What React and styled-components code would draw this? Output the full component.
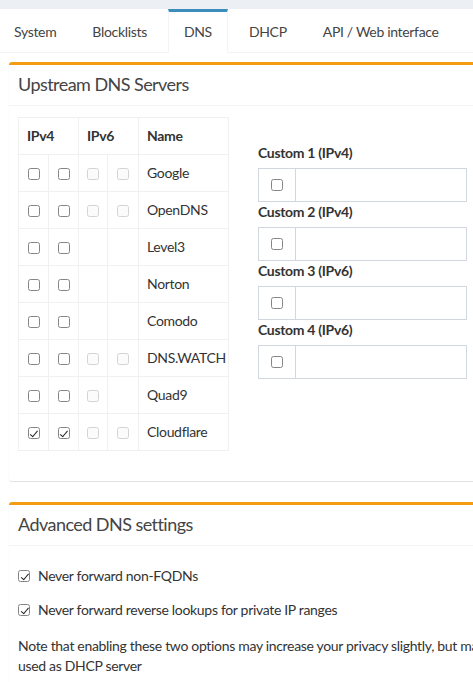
import React from "react";
import styled, { createGlobalStyle, css } from "styled-components";

const GlobalStyle = createGlobalStyle`
  html, body { margin: 0; padding: 0; }
  body {
    overflow: hidden;
    background: #ecf0f5;
    font-family: "Lato", "Liberation Sans", sans-serif;
    font-size: 14px;
    letter-spacing: -0.32px;
    color: #333;
  }
  * { box-sizing: border-box; }
`;

const Page = styled.div`
  width: 1000px;
  padding-top: 9px;
`;

const TabsPanel = styled.div`
  background: #fff;
  min-height: 700px;
`;

const TabBar = styled.ul`
  display: flex;
  margin: 0;
  padding: 0;
  list-style: none;
  border-bottom: 1px solid #f4f4f4;
`;

const Tab = styled.li`
  padding: 10px 15px;
  margin-right: 6px;
  line-height: 20px;
  color: #444;
  border-top: 3px solid transparent;
  white-space: nowrap;
  &:first-child {
    padding-left: 14px;
  }
  ${(p) =>
    p.$active &&
    css`
      border-top-color: #3c8dbc;
      border-left: 1px solid #f4f4f4;
      border-right: 1px solid #f4f4f4;
      margin-bottom: -1px;
      padding-bottom: 11px;
      background: #fff;
    `}
`;

const TabContent = styled.div`
  padding: 9px;
`;

const Box = styled.section`
  width: ${(p) => p.$width}px;
  background: #fff;
  border-top: 3px solid #f39c12;
  border-radius: 3px;
  box-shadow: 0 1px 1px rgba(0, 0, 0, 0.12);
  margin-bottom: 21px;
`;

const BoxHeader = styled.div`
  padding: 10px 10px 11px 9px;
  border-bottom: 1px solid #f4f4f4;
`;

const BoxTitle = styled.h3`
  margin: 0;
  font-size: 18px;
  line-height: 19px;
  letter-spacing: -0.55px;
  font-weight: 400;
  color: #444;
`;

const BoxBody = styled.div`
  padding: 11px 10px 10px 9px;
`;

const Columns = styled.div`
  display: grid;
  grid-template-columns: 210px 209px;
  column-gap: 30px;
  align-items: start;
`;

const Table = styled.table`
  border-collapse: collapse;
  table-layout: fixed;
  width: 210px;
  margin-bottom: 20px;
  border: 1px solid #f0f0f0;
`;

const Th = styled.th`
  border: 1px solid #f0f0f0;
  padding: 8px 8px;
  line-height: 20px;
  text-align: left;
  font-weight: 700;
  color: #333;
`;

const Td = styled.td`
  border: 1px solid #f0f0f0;
  padding: 8px ${(p) => (p.$box ? "0" : "8px")};
  line-height: 20px;
  height: 37px;
  text-align: ${(p) => (p.$box ? "center" : "left")};
  vertical-align: middle;
  color: #333;
  white-space: nowrap;
`;

const Check = styled.input.attrs({ type: "checkbox", readOnly: true })`
  appearance: none;
  -webkit-appearance: none;
  display: inline-block;
  position: relative;
  width: 12px;
  height: 12px;
  margin: 0;
  vertical-align: middle;
  border: 1px solid ${(p) => (p.disabled ? "#d4d4d4" : "#858585")};
  border-radius: 2.5px;
  background: ${(p) => (p.disabled ? "#fbfbfb" : "#fff")};
  flex-shrink: 0;
  &:checked::after {
    content: "";
    position: absolute;
    left: 3.5px;
    top: 0.5px;
    width: 3px;
    height: 6.5px;
    border: solid #222;
    border-width: 0 1.6px 1.6px 0;
    transform: rotate(40deg);
  }
`;

const CustomColumn = styled.div`
  padding-top: 26px;
`;

const FieldLabel = styled.label`
  display: block;
  font-weight: 700;
  line-height: 20px;
  margin-bottom: 5px;
  color: #333;
`;

const InputGroup = styled.div`
  display: flex;
  height: 34px;
`;

const Addon = styled.div`
  width: 37px;
  display: flex;
  align-items: center;
  justify-content: center;
  border: 1px solid #d2d6de;
  border-right: 0;
`;

const TextInput = styled.input`
  flex: 1;
  min-width: 0;
  height: 34px;
  border: 1px solid #d2d6de;
  padding: 6px 12px;
  font: inherit;
  outline: none;
`;

const OptionList = styled.div`
  display: flex;
  flex-direction: column;
  gap: 14px;
  padding-top: 9px;
`;

const Option = styled.label`
  display: flex;
  align-items: center;
  gap: 8px;
  line-height: 20px;
  color: #333;
`;

const Note = styled.p`
  margin: 16px 0 10px;
  line-height: 20px;
  color: #333;
  white-space: nowrap;
`;

const servers = [
  { name: "Google", v6: 2 },
  { name: "OpenDNS", v6: 2 },
  { name: "Level3", v6: 0 },
  { name: "Norton", v6: 0 },
  { name: "Comodo", v6: 0 },
  { name: "DNS.WATCH", v6: 2 },
  { name: "Quad9", v6: 1 },
  { name: "Cloudflare", v6: 2, checked: true },
];

const customs = [
  "Custom 1 (IPv4)",
  "Custom 2 (IPv4)",
  "Custom 3 (IPv6)",
  "Custom 4 (IPv6)",
];

const tabs = ["System", "Blocklists", "DNS", "DHCP", "API / Web interface", "Privacy", "Teleporter"];

export default function App() {
  return (
    <>
      <GlobalStyle />
      <Page>
        <TabsPanel>
          <TabBar>
            {tabs.map((t) => (
              <Tab key={t} $active={t === "DNS"}>
                {t}
              </Tab>
            ))}
          </TabBar>
          <TabContent>
            <Box $width={468}>
              <BoxHeader>
                <BoxTitle>Upstream DNS Servers</BoxTitle>
              </BoxHeader>
              <BoxBody>
                <Columns>
                  <Table>
                    <colgroup>
                      <col style={{ width: 30 }} />
                      <col style={{ width: 30 }} />
                      <col style={{ width: 29 }} />
                      <col style={{ width: 31 }} />
                      <col style={{ width: 90 }} />
                    </colgroup>
                    <thead>
                      <tr>
                        <Th colSpan={2}>IPv4</Th>
                        <Th colSpan={2}>IPv6</Th>
                        <Th>Name</Th>
                      </tr>
                    </thead>
                    <tbody>
                      {servers.map((s) => (
                        <tr key={s.name}>
                          <Td $box>
                            <Check checked={!!s.checked} />
                          </Td>
                          <Td $box>
                            <Check checked={!!s.checked} />
                          </Td>
                          <Td $box>{s.v6 >= 1 && <Check disabled />}</Td>
                          <Td $box>{s.v6 >= 2 && <Check disabled />}</Td>
                          <Td>{s.name}</Td>
                        </tr>
                      ))}
                    </tbody>
                  </Table>
                  <CustomColumn>
                    {customs.map((c) => (
                      <div key={c}>
                        <FieldLabel>{c}</FieldLabel>
                        <InputGroup>
                          <Addon>
                            <Check />
                          </Addon>
                          <TextInput type="text" />
                        </InputGroup>
                      </div>
                    ))}
                  </CustomColumn>
                </Columns>
              </BoxBody>
            </Box>
            <Box $width={980}>
              <BoxHeader>
                <BoxTitle>Advanced DNS settings</BoxTitle>
              </BoxHeader>
              <BoxBody>
                <OptionList>
                  <Option>
                    <Check checked />
                    Never forward non-FQDNs
                  </Option>
                  <Option>
                    <Check checked />
                    Never forward reverse lookups for private IP ranges
                  </Option>
                </OptionList>
                <Note>
                  Note that enabling these two options may increase your privacy slightly, but may also prevent you from being able to access local hostnames if the Pi-hole is not
                  <br />
                  used as DHCP server
                </Note>
              </BoxBody>
            </Box>
          </TabContent>
        </TabsPanel>
      </Page>
    </>
  );
}
